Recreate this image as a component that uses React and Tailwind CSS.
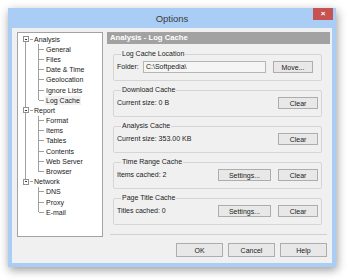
import React from "react";

const tree = [
  { label: "Analysis", children: ["General", "Files", "Date & Time", "Geolocation", "Ignore Lists", "Log Cache"] },
  { label: "Report", children: ["Format", "Items", "Tables", "Contents", "Web Server", "Browser"] },
  { label: "Network", children: ["DNS", "Proxy", "E-mail"] },
];

function Button({ children, className = "" }) {
  return (
    <button
      type="button"
      className={
        "h-[12px] bg-[#e8e8e8] border border-[#adadad] text-[7px] leading-none text-[#222] flex items-center justify-center " +
        className
      }
    >
      {children}
    </button>
  );
}

function Group({ title, children }) {
  return (
    <fieldset className="border border-[#d5d5d5] rounded-[2px] ml-[6px] mr-[8px] px-[3px] pb-[7px] pt-[3px]">
      <legend className="ml-[4px] px-[1px] text-[7px] leading-[8px] text-[#222]">{title}</legend>
      <div className="flex items-center h-[12px]">{children}</div>
    </fieldset>
  );
}

function TreeView() {
  return (
    <div className="w-[86px] h-[205px] bg-white border border-[#a3a3a3] pt-[1px] shrink-0">
      {tree.map((g, gi) => {
        const lastGroup = gi === tree.length - 1;
        return (
          <div key={g.label}>
            <div className="relative flex items-center h-[10.2px]">
              {gi > 0 && <span className="absolute left-[7px] top-0 h-1/2 w-px bg-[#a0a0a0]" />}
              {!lastGroup && <span className="absolute left-[7px] top-1/2 h-1/2 w-px bg-[#a0a0a0]" />}
              <span className="relative ml-[5px] w-[6px] h-[6px] border border-[#8f8f8f] bg-white flex items-center justify-center">
                <span className="w-[2px] h-px bg-[#333]" />
              </span>
              <span className="w-[3px] h-px bg-[#a0a0a0] ml-px" />
              <span className="ml-px text-[7px] leading-none text-[#1a1a1a]">{g.label}</span>
            </div>
            {g.children.map((c, ci) => {
              const lastChild = ci === g.children.length - 1;
              return (
                <div key={c} className="relative flex items-center h-[10.2px]">
                  {!lastGroup && <span className="absolute left-[7px] top-0 h-full w-px bg-[#a0a0a0]" />}
                  <span className={"absolute left-[20px] top-0 w-px bg-[#a0a0a0] " + (lastChild ? "h-1/2" : "h-full")} />
                  <span className="ml-[21px] w-[5px] h-px bg-[#a0a0a0]" />
                  <span
                    className={
                      "ml-px px-px text-[7px] leading-[9px] text-[#1a1a1a] " + (c === "Log Cache" ? "bg-[#f0f0f0]" : "")
                    }
                  >
                    {c}
                  </span>
                </div>
              );
            })}
          </div>
        );
      })}
    </div>
  );
}

export default function App() {
  return (
    <div className="w-[350px] h-[280px] bg-white overflow-hidden pt-[8px] pl-[8px] font-['Liberation_Sans',Arial,sans-serif]">
      <div className="w-[328px] h-[259px] bg-[#a9cdf4] flex flex-col shadow-[1px_3px_9px_rgba(0,0,0,0.4)]">
        <div className="relative h-[20px] flex items-center justify-center">
          <span className="text-[9.5px] leading-none text-[#3c3c3c] mt-[1px]">Options</span>
          <div className="absolute right-[3px] top-0 w-[20px] h-[12px] bg-[#c75252] flex items-center justify-center">
            <span className="text-[8px] leading-none font-bold text-white">×</span>
          </div>
        </div>
        <div className="flex-1 mx-[4px] mb-[4px] bg-[#f0f0f0] flex items-start pt-[4px] pl-[5px]">
          <TreeView />
          <div className="ml-[4px] w-[223px] flex flex-col">
            <div className="h-[12px] bg-[#a2a2a2] flex items-center pl-[3px]">
              <span className="text-[7.7px] font-bold text-white leading-none">Analysis - Log Cache</span>
            </div>
            <div className="mt-[6px] flex flex-col gap-[5px]">
              <Group title="Log Cache Location">
                <span className="text-[7px] text-[#222] w-[26px]">Folder:</span>
                <div className="w-[123px] h-[12px] bg-[#f5f5f5] border border-[#b5b5b5] flex items-center pl-[2px] text-[7px] text-[#222]">
                  C:\Softpedia\
                </div>
                <Button className="ml-[7px] w-[40px]">Move...</Button>
              </Group>
              <Group title="Download Cache">
                <span className="text-[7px] text-[#222]">Current size: 0 B</span>
                <Button className="ml-auto w-[40px]">Clear</Button>
              </Group>
              <Group title="Analysis Cache">
                <span className="text-[7px] text-[#222]">Current size: 353.00 KB</span>
                <Button className="ml-auto w-[40px]">Clear</Button>
              </Group>
              <Group title="Time Range Cache">
                <span className="text-[7px] text-[#222]">Items cached: 2</span>
                <Button className="ml-auto w-[53px]">Settings...</Button>
                <Button className="ml-[7px] w-[40px]">Clear</Button>
              </Group>
              <Group title="Page Title Cache">
                <span className="text-[7px] text-[#222]">Titles cached: 0</span>
                <Button className="ml-auto w-[53px]">Settings...</Button>
                <Button className="ml-[7px] w-[40px]">Clear</Button>
              </Group>
            </div>
            <div className="mt-[9px] mx-[3px] h-px bg-[#d0d0d0]" />
            <div className="mt-[8px] mr-[3px] flex justify-end gap-[5px]">
              <Button className="w-[47px] h-[14px]">OK</Button>
              <Button className="w-[47px] h-[14px]">Cancel</Button>
              <Button className="w-[47px] h-[14px]">Help</Button>
            </div>
          </div>
        </div>
      </div>
    </div>
  );
}
